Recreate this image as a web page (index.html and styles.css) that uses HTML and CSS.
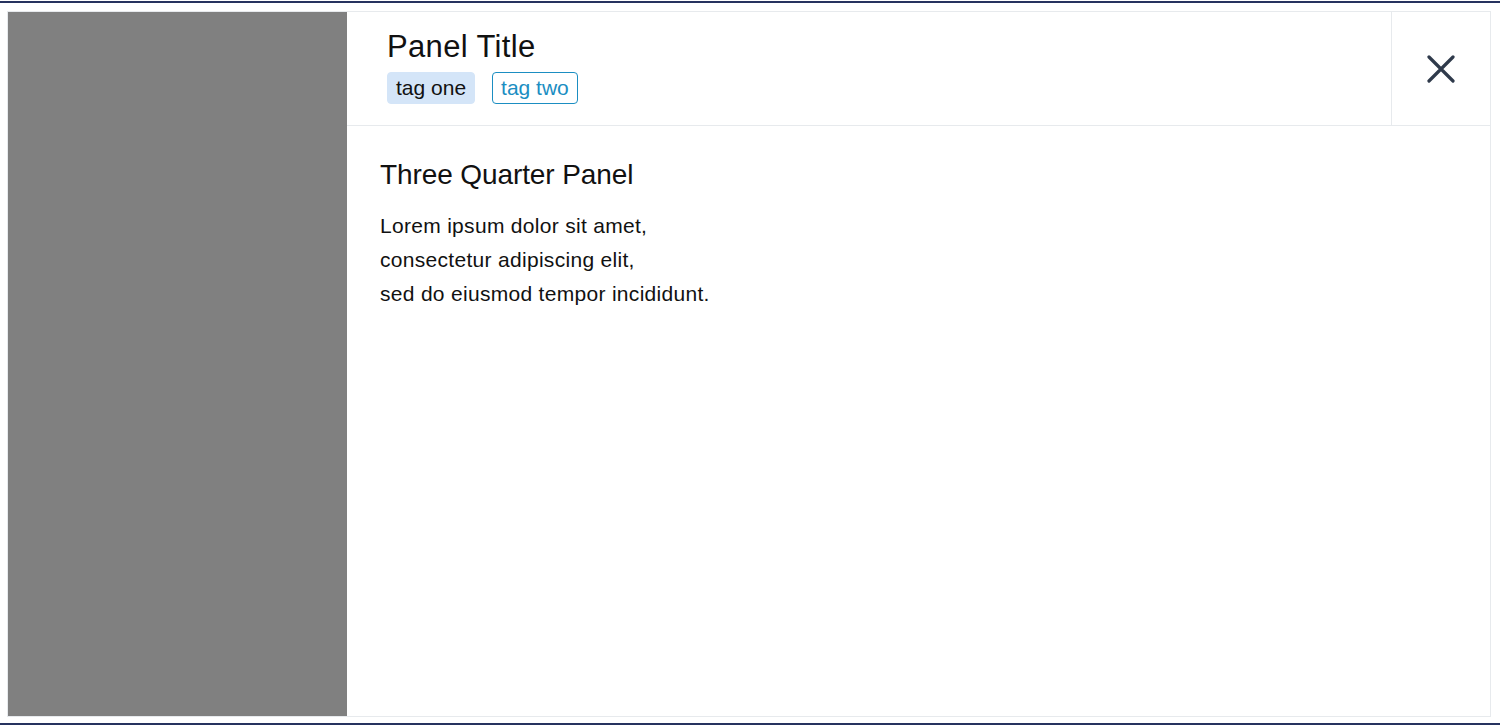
FILE: index.html
```html
<!DOCTYPE html>
<html lang="en">
<head>
<meta charset="utf-8">
<title>Three Quarter Panel</title>
<link rel="stylesheet" href="styles.css">
</head>
<body>
<div class="frame">
  <div class="panel">
    <aside class="sidebar"></aside>
    <section class="main">
      <header class="header">
        <div class="header-text">
          <h1 class="title">Panel Title</h1>
          <div class="tags">
            <span class="tag tag-filled">tag one</span>
            <span class="tag tag-outline">tag two</span>
          </div>
        </div>
        <button class="close" type="button" aria-label="Close">
          <svg width="28" height="28" viewBox="0 0 28 28" fill="none" stroke="#2f3a4b" stroke-width="3.2" stroke-linecap="round">
            <path d="M2 2 L26 26 M26 2 L2 26"/>
          </svg>
        </button>
      </header>
      <div class="content">
        <h2 class="heading">Three Quarter Panel</h2>
        <p class="text">Lorem ipsum dolor sit amet,<br>consectetur adipiscing elit,<br>sed do eiusmod tempor incididunt.</p>
      </div>
    </section>
  </div>
</div>
</body>
</html>
```
FILE: styles.css
```css
html, body {
  margin: 0;
  padding: 0;
  background: #ffffff;
}
body {
  font-family: "Liberation Sans", Arial, sans-serif;
  color: #111111;
  padding-top: 1px;
}
.frame {
  box-sizing: border-box;
  height: 724px;
  border-top: 2px solid #26335f;
  border-bottom: 2px solid #26335f;
  padding: 8px 9px 6px 7px;
  display: flex;
}
.panel {
  flex: 1;
  display: flex;
  border: 1px solid #e7eaed;
}
.sidebar {
  width: 339px;
  background: #808080;
  flex: none;
}
.main {
  flex: 1;
  display: flex;
  flex-direction: column;
  background: #ffffff;
}
.header {
  display: flex;
  border-bottom: 1px solid #e7eaed;
}
.header-text {
  flex: 1;
  padding: 17px 40px 21px 40px;
}
.title {
  margin: 0;
  font-size: 31px;
  line-height: 36px;
  font-weight: 400;
  letter-spacing: 0.35px;
  color: #111111;
}
.tags {
  display: flex;
  gap: 17px;
  margin-top: 7px;
}
.tag {
  box-sizing: border-box;
  height: 32px;
  padding: 0 8px;
  font-size: 21px;
  line-height: 30px;
  border: 1px solid transparent;
  border-radius: 4px;
}
.tag-filled {
  background: #d4e5f8;
  border-color: #d4e5f8;
  color: #111111;
}
.tag-outline {
  border-color: #1b8ec2;
  color: #1b8ec2;
}
.close {
  width: 99px;
  flex: none;
  border: 0;
  border-left: 1px solid #e7eaed;
  background: transparent;
  padding: 0;
  display: flex;
  align-items: center;
  justify-content: center;
  cursor: pointer;
}
.content {
  padding: 33px 32px 33px 33px;
}
.heading {
  margin: 0 0 18px;
  font-size: 28px;
  line-height: 32px;
  font-weight: 400;
  letter-spacing: -0.1px;
}
.text {
  margin: 0;
  font-size: 21px;
  line-height: 34px;
  letter-spacing: 0.3px;
}
```
